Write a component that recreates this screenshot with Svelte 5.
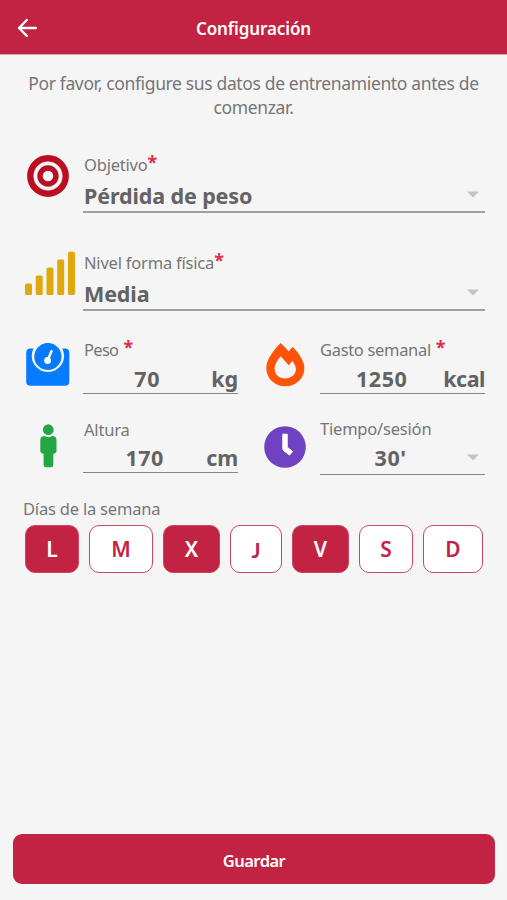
<script>
  let days = $state([
    { name: 'L', width: 54, on: true },
    { name: 'M', width: 64, on: false },
    { name: 'X', width: 57, on: true },
    { name: 'J', width: 52, on: false },
    { name: 'V', width: 57, on: true },
    { name: 'S', width: 54, on: false },
    { name: 'D', width: 60, on: false }
  ]);
</script>

{#snippet caret()}
  <svg class="caret" width="12" height="7" viewBox="0 0 12 7"><path d="M0 0.5H12L6 6.5Z" fill="#c4c4c4" /></svg>
{/snippet}

<div class="screen">
  <header>
    <svg class="back" width="20" height="20" viewBox="0 0 20 20" fill="none" stroke="#fff" stroke-width="2.4" stroke-linecap="round" stroke-linejoin="round">
      <path d="M9.8 2L2 10L9.800 17.800M2 10H18.800" />
    </svg>
    <h1>Configuración</h1>
  </header>

  <p class="intro">Por favor, configure sus datos de entrenamiento antes de<br />comenzar.</p>

  <section class="row goal">
    <div class="icon">
      <svg width="42" height="42" viewBox="0 0 42 42" fill="none" stroke="#b90f20">
        <circle cx="21" cy="21" r="17.7" stroke-width="6.4" />
        <circle cx="21" cy="21" r="8" stroke-width="5.4" />
      </svg>
    </div>
    <div class="field wide">
      <div class="label"><span>Objetivo</span><b class="star">*</b></div>
      <div class="value"><span>Pérdida de peso</span>{@render caret()}</div>
    </div>
  </section>

  <section class="row level">
    <div class="icon">
      <svg width="50" height="44" viewBox="0 0 50 44" fill="#e0a80d">
        <rect x="0" y="32.500" width="7" height="11.5" rx="1.5" />
        <rect x="10.7" y="24.500" width="7" height="19.5" rx="1.5" />
        <rect x="21.5" y="16.500" width="7" height="27.5" rx="1.5" />
        <rect x="32.2" y="8.500" width="7" height="35.5" rx="1.5" />
        <rect x="43" y="0.8" width="7" height="43.200" rx="1.5" />
      </svg>
    </div>
    <div class="field wide">
      <div class="label"><span>Nivel forma física</span><b class="star">*</b></div>
      <div class="value"><span>Media</span>{@render caret()}</div>
    </div>
  </section>

  <section class="row weight">
    <div class="icon">
      <svg width="44" height="44" viewBox="0 0 44 44">
        <path d="M4.500 5.500H7.500A16.200 16.200 0 1 0 36.300 5.500H39Q43.300 5.500 43.300 9.800V38.500Q43.300 42.800 39 42.800H4.500Q.2 42.800 .2 38.500V9.800Q.2 5.500 4.500 5.500Z" fill="#077bff" />
        <circle cx="21.900" cy="13.500" r="13.600" fill="#077bff" />
        <path d="M21.600 17.500L25.600 8" stroke="#fff" stroke-width="2.400" stroke-linecap="round" />
        <circle cx="21.600" cy="17.500" r="3.400" fill="#fff" />
      </svg>
    </div>
    <div class="field half">
      <div class="label"><span class="tight">Peso</span><b class="star gap">*</b></div>
      <div class="value"><span class="num">70</span><span class="unit">kg</span></div>
    </div>
    <div class="icon second">
      <svg width="39" height="44" viewBox="0 0 39 44" fill="#ff5408">
        <path fill-rule="evenodd" d="M14.600 .1Q18.900 4 22.700 8.400Q24.700 5.800 26.800 4.100Q31.500 8.500 35 14.500Q38.400 20.500 38.400 25C38.400 35.500 30 43.300 19.300 43.300S.3 35.500 .3 25Q.3 18.500 5.500 11Q9.500 5 14.600 .1ZM14.700 13.300Q8.600 20.500 8.600 25.400C8.600 31.600 13.100 35.400 19.200 35.400C25.500 35.400 29.900 31.300 29.900 26Q29.900 22.800 26.400 18L22.700 22.300Z" />
      </svg>
    </div>
    <div class="field last">
      <div class="label"><span class="spend">Gasto semanal</span><b class="star gap">*</b></div>
      <div class="value"><span class="num">1250</span><span class="unit kcal">kcal</span></div>
    </div>
  </section>

  <section class="row height">
    <div class="icon person">
      <svg width="17" height="44" viewBox="0 0 17 44" fill="#24a743">
        <circle cx="8.300" cy="5.700" r="5.400" />
        <path d="M4.500 12Q8.300 14.300 12.100 12Q16.500 12 16.500 16V27Q16.500 29.200 13.300 29.800V40.800Q13.300 43.300 10.900 43.300H6Q3.600 43.300 3.600 40.800V29.800Q.3 29.200 .3 27V16Q.3 12 4.500 12Z" />
      </svg>
    </div>
    <div class="field half">
      <div class="label"><span>Altura</span></div>
      <div class="value"><span class="num">170</span><span class="unit">cm</span></div>
    </div>
    <div class="icon second">
      <svg width="42" height="42" viewBox="0 0 42 42">
        <circle cx="21" cy="21" r="20.800" fill="#6f42c1" />
        <path d="M18.800 8.200H23.200V21.200L28.600 25.500L25.500 29L19.800 24.800Q18.800 23.900 18.800 22.500Z" fill="#fff" stroke="#fff" stroke-width="1" stroke-linejoin="round" />
      </svg>
    </div>
    <div class="field last session">
      <div class="label"><span>Tiempo/sesión</span></div>
      <div class="value"><span class="num">30'</span>{@render caret()}</div>
    </div>
  </section>

  <section class="week">
    <div class="label"><span>Días de la semana</span></div>
    <div class="days">
      {#each days as day}
        <button class:on={day.on} class:flat={day.name === 'J'} style="width: {day.width}px" onclick={() => (day.on = !day.on)}>{day.name}</button>
      {/each}
    </div>
  </section>

  <footer><button class="save">Guardar</button></footer>
</div>

<style>
  :global(body) { margin: 0; background: #f5f5f5; }
  .screen {
    box-sizing: border-box;
    width: 507px;
    height: 900px;
    display: flex;
    flex-direction: column;
    background: #f5f5f5;
    color: #757575;
    font-family: "Noto Sans", "Open Sans", sans-serif;
    overflow: hidden;
  }
  header {
    height: 54px;
    flex: none;
    display: flex;
    align-items: center;
    background: #c22342;
    border-bottom: 1px solid #d9a0aa;
  }
  .back { margin: 1px 0 0 17px; }
  h1 {
    flex: 1;
    margin: 4px 37px 0 0;
    text-align: center;
    font-size: 17px;
    font-weight: 600;
    letter-spacing: -0.1px;
    line-height: 24px;
    color: #fff;
  }
  .intro {
    margin: 16px 0 0;
    text-align: center;
    font-size: 17.500px;
    letter-spacing: -0.360px;
    line-height: 24px;
    white-space: nowrap;
  }
  .row { display: flex; flex: none; }
  .icon { width: 50px; margin-left: 23px; display: flex; justify-content: center; flex: none; }
  .icon svg { display: block; flex: none; }
  .field { margin-left: 10px; }
  .wide { width: 402px; }
  .half { width: 155px; }
  .second { margin-left: 22px; }
  .last { width: 165px; }
  .label {
    height: 24px;
    line-height: 24px;
    padding-left: 1px;
    font-size: 16.500px;
    letter-spacing: -0.200px;
    display: flex;
    white-space: nowrap;
  }
  .tight { letter-spacing: -0.700px; }
  .spend { letter-spacing: -0.320px; }
  .last .label { padding-left: 0; }
  .star { color: #dc3048; font-size: 18px; line-height: 19px; }
  .gap { margin-left: 5px; }
  .value {
    display: flex;
    align-items: center;
    justify-content: space-between;
    height: 34px;
    padding-right: 6px;
    font-size: 21.500px;
    font-weight: 700;
    letter-spacing: -0.120px;
    color: #636363;
    border-bottom: 2px solid #a0a0a0;
    white-space: nowrap;
  }
  .value span { padding-top: 2px; }
  .wide .value { height: 33px; padding-top: 1px; padding-left: 1px; width: 395px; }
  .wide .value span { padding-top: 1px; }
  .goal { margin-top: 34px; height: 98px; }
  .goal .icon { padding-top: 2px; }
  .level { height: 87px; }
  .level .icon { margin-left: 25px; margin-right: -2px; }
  .weight { height: 80px; }
  .weight .value, .height .value { height: 31px; padding: 0; border-width: 1px; border-color: #858585; }
  .height .value { height: 30px; }
  .height .half .value span { padding-top: 0; }
  .weight .icon { padding-top: 5px; }
  .height .icon { padding-top: 8px; }
  .height .person { padding-top: 6px; }
  .height { height: 79px; }
  .height .session .label { margin-top: -1px; }
  .height .session .value { height: 33px; padding-right: 6px; }
  .value .num { flex: 1; text-align: center; letter-spacing: 0.500px; }
  .session .num { margin-left: -6px; }
  .height .session .value span { padding-top: 0; }
  .kcal { letter-spacing: -0.500px; }
  .week { padding-left: 25px; }
  .week .label { margin-left: -3px; }
  .days { display: flex; justify-content: space-between; width: 458px; margin-top: 4px; }
  .days button {
    height: 48px;
    box-sizing: border-box;
    padding: 0;
    border: 1.500px solid #cb4660;
    border-radius: 10px;
    background: #fff;
    color: #c22342;
    font: 600 21px "Noto Sans", sans-serif;
  }
  .days .on { background: #c22342; color: #fff; }
  .days .flat { font: 700 21px Lato, sans-serif; }
  footer { margin: auto 12px 16px 13px; }
  .save {
    display: block;
    width: 100%;
    height: 50px;
    padding: 3px 0 0;
    border: 0;
    border-radius: 9px;
    background: #c22342;
    color: #fff;
    font: 600 16.500px "Noto Sans", sans-serif;
    letter-spacing: -0.550px;
  }
</style>
